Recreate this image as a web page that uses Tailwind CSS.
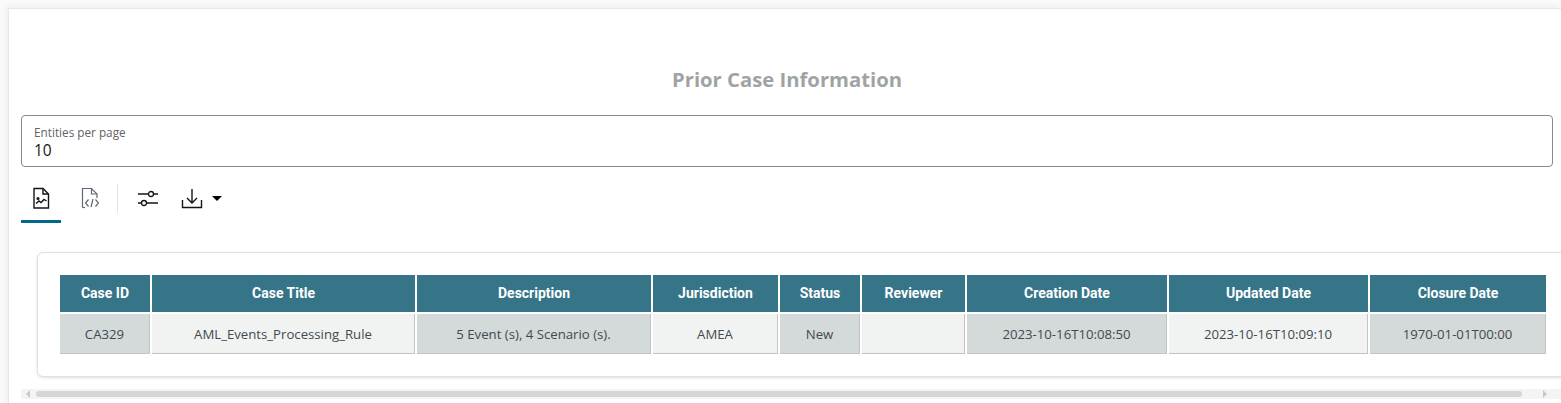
<!DOCTYPE html>
<html lang="en">
<head>
    <meta charset="UTF-8">
    <title>Prior Case Information</title>
    <script src="https://cdn.jsdelivr.net/npm/@tailwindcss/browser@4"></script>
</head>
<body class="bg-[#fafafa] h-[403px] overflow-hidden font-['Open_Sans',sans-serif]">
    <div class="ml-2 mt-2 h-[395px] bg-white border-t border-l border-[#e8e8e8] shadow-[-2px_-2px_6px_rgba(0,0,0,0.05)] pl-3 pr-2 flex flex-col">
        <h1 class="mt-[56px] h-7 text-center text-[20.25px] leading-7 font-bold text-[#a0a3a3]">Prior Case Information</h1>

        <!-- page size field -->
        <div class="mt-[22px] h-[52px] border border-[#8a8a8a] rounded-[4px] px-3 pt-[9px]">
            <div class="text-[11.75px] leading-[15px] text-[#5f6468]">Entities per page</div>
            <div class="text-[15.5px] leading-[20px] text-[#161513]">10</div>
        </div>

        <!-- toolbar -->
        <div class="mt-[15px] h-[41px] flex items-start">
            <div class="w-10 h-[41px] border-b-[3px] border-[#00688c] flex justify-center pt-[5px]">
                <svg class="w-[18px] h-[22px]" viewBox="0 0 18 22" fill="none" stroke="#161513" stroke-width="1.4">
                    <path d="M2 1.500h9l5.500 5.500v14H2z"/><path d="M11 1.500v5.500h5.500"/><path d="M4 16.500l3-2.500 2 1.500 3-3 2.500 1.500"/><circle cx="6" cy="11.500" r=".9"/>
                </svg>
            </div>
            <div class="w-14 flex justify-center pt-[5px] pl-[2px]">
                <svg class="w-[18px] h-[22px]" viewBox="0 0 18 22" fill="none" stroke="#5f6875" stroke-width="1.2">
                    <path d="M1.500 20.500v-19h9l5.500 5.500v4"/><path d="M10.500 1.500v5.500h5.500"/><path d="M1.500 20.500h2.500"/><path d="M7.500 12.500l-3 3.500 3 3.500M14.500 12.500l3 3.500-3 3.500M12 12l-2 8"/>
                </svg>
            </div>
            <div class="w-px h-[29px] mt-[2px] bg-[#e4e4e4]"></div>
            <div class="ml-[19px] pt-[7px]">
                <svg class="w-[22px] h-[18px]" viewBox="0 0 22 18" fill="none" stroke="#161513" stroke-width="1.3">
                    <path d="M1 5h20M1 14h20"/><circle cx="14" cy="5" r="2.500" fill="#fff"/><circle cx="7" cy="14" r="2.500" fill="#fff"/>
                </svg>
            </div>
            <div class="ml-[22px] pt-[5px]">
                <svg class="w-[22px] h-[22px]" viewBox="0 0 22 22" fill="none" stroke="#161513" stroke-width="1.4">
                    <path d="M11 2v14M6 11l5 5 5-5M1.500 13v7.500h19V13"/>
                </svg>
            </div>
            <div class="ml-[9px] mt-[14px] w-0 h-0 border-x-[5px] border-x-transparent border-t-[5px] border-t-black"></div>
        </div>

        <!-- table card -->
        <div class="mt-[29px] ml-4 -mr-4 h-[125px] shrink-0 bg-white border border-[#e0e0e0] rounded-[6px] shadow-[0_1px_3px_rgba(0,0,0,0.12)] pl-[22px] pt-[22px]">
            <div class="grid grid-cols-[90px_263px_234px_125px_80px_103px_200px_199px_176px] gap-[2px] text-center">
                <div class="h-[37px] bg-[#367588] text-white font-['Roboto',sans-serif] font-bold text-[14px] leading-[37px]">Case ID</div>
                <div class="h-[37px] bg-[#367588] text-white font-['Roboto',sans-serif] font-bold text-[14px] leading-[37px]">Case Title</div>
                <div class="h-[37px] bg-[#367588] text-white font-['Roboto',sans-serif] font-bold text-[14px] leading-[37px]">Description</div>
                <div class="h-[37px] bg-[#367588] text-white font-['Roboto',sans-serif] font-bold text-[14px] leading-[37px]">Jurisdiction</div>
                <div class="h-[37px] bg-[#367588] text-white font-['Roboto',sans-serif] font-bold text-[14px] leading-[37px]">Status</div>
                <div class="h-[37px] bg-[#367588] text-white font-['Roboto',sans-serif] font-bold text-[14px] leading-[37px]">Reviewer</div>
                <div class="h-[37px] bg-[#367588] text-white font-['Roboto',sans-serif] font-bold text-[14px] leading-[37px]">Creation Date</div>
                <div class="h-[37px] bg-[#367588] text-white font-['Roboto',sans-serif] font-bold text-[14px] leading-[37px]">Updated Date</div>
                <div class="h-[37px] bg-[#367588] text-white font-['Roboto',sans-serif] font-bold text-[14px] leading-[37px]">Closure Date</div>

                <div class="h-10 bg-[#d4d9d9] border-r border-b border-[#c0c4c4] text-[#3f4a50] text-[13.2px] leading-[40px]">CA329</div>
                <div class="h-10 bg-[#f1f3f3] border-r border-b border-[#c0c4c4] text-[#3f4a50] text-[13.2px] leading-[40px]">AML_Events_Processing_Rule</div>
                <div class="h-10 bg-[#d4d9d9] border-r border-b border-[#c0c4c4] text-[#3f4a50] text-[13.2px] leading-[40px]">5 Event (s), 4 Scenario (s).</div>
                <div class="h-10 bg-[#f1f3f3] border-r border-b border-[#c0c4c4] text-[#3f4a50] text-[13.2px] leading-[40px]">AMEA</div>
                <div class="h-10 bg-[#d4d9d9] border-r border-b border-[#c0c4c4] text-[#3f4a50] text-[13.2px] leading-[40px]">New</div>
                <div class="h-10 bg-[#f1f3f3] border-r border-b border-[#c0c4c4]"></div>
                <div class="h-10 bg-[#d4d9d9] border-r border-b border-[#c0c4c4] text-[#3f4a50] text-[13.2px] leading-[40px]">2023-10-16T10:08:50</div>
                <div class="h-10 bg-[#f1f3f3] border-r border-b border-[#c0c4c4] text-[#3f4a50] text-[13.2px] leading-[40px]">2023-10-16T10:09:10</div>
                <div class="h-10 bg-[#d4d9d9] border-r border-b border-[#c0c4c4] text-[#3f4a50] text-[13.2px] leading-[40px]">1970-01-01T00:00</div>
            </div>
        </div>

        <!-- horizontal scrollbar -->
        <div class="mt-3 h-[10px] shrink-0 bg-[#f4f4f4] flex items-center -mr-2 pl-[5px]">
            <div class="w-0 h-0 border-y-[4px] border-y-transparent border-r-[4px] border-r-[#c8c8c8]"></div>
            <div class="ml-[6px] w-[1486px] h-[6px] rounded-full bg-[#d6d6d6]"></div>
            <div class="ml-[21px] w-0 h-0 border-y-[4px] border-y-transparent border-l-[4px] border-l-[#c8c8c8]"></div>
        </div>
    </div>
</body>
</html>
